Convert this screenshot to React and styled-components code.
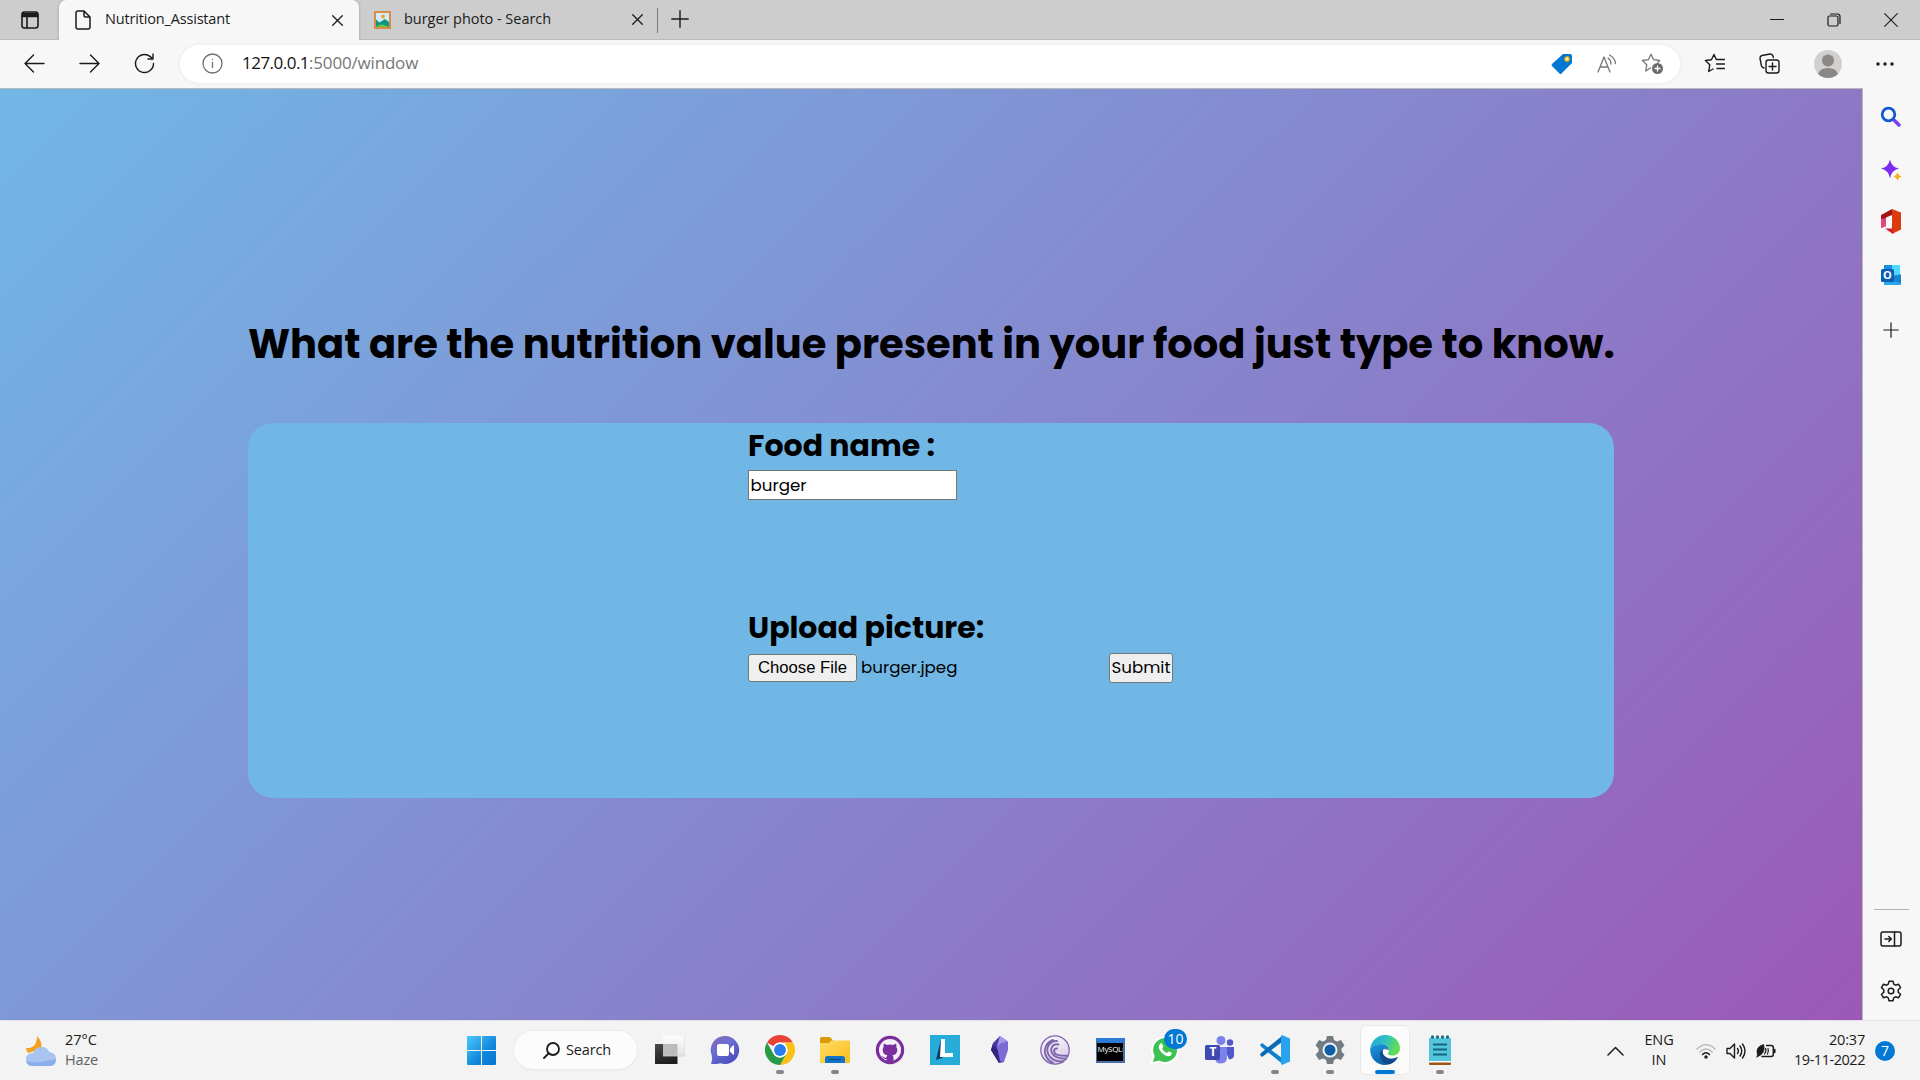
import React from "react";
import styled, { createGlobalStyle, css } from "styled-components";

const Global = createGlobalStyle`
  *, *::before, *::after { box-sizing: border-box; }
  html, body { margin: 0; padding: 0; overflow: hidden; }
  body { background: #f7f7f7; font-family: "Segoe UI", "Open Sans", sans-serif; }
  svg { display: block; flex: none; }
`;

const Desktop = styled.div`
  width: 1920px;
  height: 1080px;
  display: grid;
  grid-template-rows: 40px 48px 932px 60px;
  color: #1b1b1b;
`;

const Label = styled.span`
  display: block;
  white-space: pre;
  font-size: ${(p) => p.$size || 14.5}px;
  line-height: ${(p) => p.$line || 20}px;
  letter-spacing: ${(p) => p.$track || 0}px;
  color: ${(p) => p.$color || "#1b1b1b"};
`;

/* ---------- tab strip ---------- */
const TabStrip = styled.header`
  display: flex;
  align-items: stretch;
  background: #cdcdcd;
  border-bottom: 1px solid #bdbdbd;
`;
const TabActions = styled.button`
  width: 59px;
  border: 0;
  padding: 0 0 0 21px;
  background: transparent;
  display: flex;
  align-items: center;
`;
const Tab = styled.div`
  width: 299px;
  display: flex;
  align-items: center;
  padding: 0 15px;
  gap: 13px;
  ${(p) =>
    p.$active &&
    css`
      height: 40px;
      width: 300px;
      padding-right: 16px;
      background: #f7f7f7;
      border-radius: 7px 7px 0 0;
      box-shadow: 0 0 3px rgba(0, 0, 0, 0.25);
      clip-path: inset(0 -4px 0 -4px);
    `}
`;
const TabTitle = styled(Label)`
  flex: 1;
  padding-bottom: 2px;
`;
const Separator = styled.span`
  width: 1px;
  height: 25px;
  margin-top: 8px;
  margin-left: -1px;
  background: #7c7c7c;
`;
const NewTab = styled.span`
  display: flex;
  align-items: center;
  padding-left: 13px;
  padding-bottom: 1px;
`;
const WindowControls = styled.div`
  margin-left: auto;
  padding-right: 22px;
  display: flex;
  align-items: center;
  gap: 43px;
`;

/* ---------- toolbar ---------- */
const Toolbar = styled.nav`
  display: flex;
  align-items: center;
  background: #f7f7f7;
  padding: 0 25px 1px 24px;
`;
const NavButtons = styled.div`
  display: flex;
  align-items: center;
  gap: 34px;
  width: 156px;
`;
const AddressBar = styled.div`
  width: 1500px;
  height: 38px;
  border-radius: 19px;
  background: #fff;
  box-shadow: 0 0 4px rgba(0, 0, 0, 0.08);
  display: flex;
  align-items: center;
  padding: 0 17px 0 22px;
`;
const Url = styled.div`
  display: flex;
  padding-left: 19px;
  padding-bottom: 1px;
  flex: 1;
`;
const AddressActions = styled.div`
  display: flex;
  align-items: center;
  gap: 24px;
`;
const ToolbarActions = styled.div`
  display: flex;
  align-items: center;
  margin-left: auto;
  gap: 34px;

  > :last-child {
    margin-left: -1px;
  }
`;

/* ---------- page ---------- */
const Workspace = styled.div`
  display: grid;
  grid-template-columns: 1863px 57px;
`;
const Page = styled.main`
  border-top: 1px solid #b9b9b9;
  border-right: 1px solid #b9b9b9;
  background: linear-gradient(135deg, #71b7e6, #9b59b6);
  padding: 225px 248px 0;
  font-family: Poppins, Inter, sans-serif;
`;
const Title = styled.h1`
  margin: 0 0 49px;
  font-size: 40px;
  line-height: 60px;
  font-weight: 700;
  white-space: nowrap;
  color: #000;
`;
const Card = styled.section`
  width: 1366px;
  height: 375px;
  border-radius: 25px;
  background: #71b7e6;
  padding-left: 500px;
  display: flex;
  flex-direction: column;
  align-items: flex-start;
`;
const FieldTitle = styled.h2`
  margin: ${(p) => p.$top || 0}px 0 0;
  font-size: 30px;
  line-height: 46px;
  font-weight: 700;
  white-space: nowrap;
  color: #000;
`;
const TextField = styled.div`
  width: 209px;
  height: 30px;
  margin-top: 1px;
  padding: 0 1.5px;
  border: 1px solid #767676;
  background: #fff;
  display: flex;
  align-items: center;
`;
const UploadRow = styled.div`
  display: flex;
  align-items: center;
  height: 30px;
  margin-top: 2px;
`;
const Button = styled.button`
  width: ${(p) => p.$w}px;
  height: ${(p) => p.$h}px;
  padding: 0 0 ${(p) => (p.$native ? 0 : 2)}px;
  border: 1px solid #767676;
  border-radius: 3px;
  background: #efefef;
  display: flex;
  align-items: center;
  justify-content: center;
  font-family: ${(p) => (p.$native ? '"Liberation Sans", Arial, sans-serif' : "inherit")};
`;
const FileName = styled.div`
  width: 252px;
  padding: 0 0 2px 4px;
`;

/* ---------- sidebar ---------- */
const Sidebar = styled.aside`
  background: #f7f7f7;
  display: flex;
  flex-direction: column;
  align-items: center;
  padding-right: 1px;
`;
const SideSlot = styled.span`
  height: ${(p) => p.$h}px;
  display: flex;
  align-items: center;
`;
const SideRule = styled.span`
  margin-top: auto;
  width: 35px;
  height: 1px;
  background: #b4b4b4;
`;
const OutlookWrap = styled.span`
  position: relative;
  display: block;
`;
const OutlookO = styled.span`
  position: absolute;
  left: 1px;
  top: 4px;
  width: 13px;
  text-align: center;
  color: #fff;
  font: 700 11px/14px "Open Sans", sans-serif;
`;

/* ---------- taskbar ---------- */
const Taskbar = styled.footer`
  background: #f3f3f3;
  border-top: 1px solid #e4e2e6;
  display: flex;
  align-items: stretch;
`;
const Weather = styled.div`
  width: 457px;
  padding-left: 25px;
  display: flex;
  align-items: center;
  gap: 8px;
`;
const Stack = styled.div`
  display: flex;
  flex-direction: column;
  padding-bottom: 2px;
  align-items: ${(p) => p.$align || "flex-start"};
`;
const StartButton = styled.div`
  width: 57px;
  padding-left: 10px;
  display: flex;
  align-items: center;
`;
const SearchPill = styled.div`
  width: 123px;
  height: 38px;
  margin: 10px 8px 0 0;
  border-radius: 19px;
  background: #fcfcfc;
  box-shadow: 0 0 0 1px #ececec, 0 1px 1px #d8d8d8;
  padding-left: 29px;
  display: flex;
  align-items: center;
  gap: 6px;
`;
const Apps = styled.div`
  display: flex;
  gap: 7px;
  padding-top: 5px;
  margin-left: 1px;
`;
const AppTile = styled.div`
  position: relative;
  width: 48px;
  height: 48px;
  border-radius: 5px;
  display: flex;
  align-items: center;
  justify-content: center;
  background: ${(p) => (p.$active ? "#fbfbfb" : "transparent")};
  box-shadow: ${(p) => (p.$active ? "0 0 0 1px #e9e9e9" : "none")};
`;
const RunMark = styled.i`
  position: absolute;
  bottom: 0;
  left: 50%;
  transform: translateX(-50%);
  width: ${(p) => (p.$active ? 20 : 8)}px;
  height: 4px;
  border-radius: 2px;
  background: ${(p) => (p.$active ? "#0078d4" : "#868686")};
`;
const Count = styled.b`
  position: absolute;
  top: 3px;
  right: 2px;
  width: 23px;
  height: 20px;
  border-radius: 10px;
  background: #0078d4;
  color: #fff;
  font-weight: 400;
  font-size: 14px;
  line-height: 20px;
  text-align: center;
`;
const Tray = styled.div`
  margin-left: auto;
  padding-right: 25px;
  display: flex;
  align-items: center;
`;
const Language = styled(Stack)`
  width: 30px;
  margin: 0 22px 0 20px;
`;
const Status = styled.div`
  display: flex;
  gap: 10px;
  margin-right: 18px;
`;
const Clock = styled(Stack)`
  width: 71px;
`;
const Alerts = styled.b`
  width: 20px;
  height: 20px;
  margin-left: 10px;
  border-radius: 50%;
  background: #0078d4;
  color: #fff;
  font-weight: 400;
  font-size: 14px;
  line-height: 20px;
  text-align: center;
`;

/* ---------- icons ---------- */
const Line = ({ w = 20, h = w, box, sw = 1.4, color = "#1b1b1b", children }) => (
  <svg width={w} height={h} viewBox={box || `0 0 ${w} ${h}`} fill="none" stroke={color} strokeWidth={sw} strokeLinecap="round" strokeLinejoin="round">
    {children}
  </svg>
);
const Cross = ({ s = 11, sw = 1.3 }) => (
  <Line w={s} sw={sw}><path d={`M.7.7 ${s - 0.7} ${s - 0.7}M${s - 0.7}.7.7 ${s - 0.7}`} /></Line>
);

const OutlookIcon = () => (
  <OutlookWrap>
    <svg width="22" height="22" viewBox="0 0 22 22"><path fill="#1490df" d="M4 1h16v12H4z" /><path fill="#50d9ff" d="M12 1h8v10h-8z" /><path fill="#28a8ea" d="M4 11h17v10H4z" /><path fill="#0f6cbd" d="M4 15l17-5v9z" opacity=".6" /><rect x="1" y="5" width="13" height="13" rx="1.500" fill="#0a5fb4" /></svg>
    <OutlookO>O</OutlookO>
  </OutlookWrap>
);
const ChatIcon = () => (
  <svg width="30" height="30" viewBox="0 0 30 30">
    <defs><linearGradient id="chat" x1="0" y1="0" x2=".7" y2="1"><stop offset="0" stopColor="#8f64b4" /><stop offset=".45" stopColor="#6b6fd0" /><stop offset="1" stopColor="#4b4cc0" /></linearGradient></defs>
    <path fill="url(#chat)" d="M15 1a14 14 0 1 1-4.500 27.200c-3 .8-6.500 1-9.500.8 1-2.500 1.200-5 .8-8.500A14 14 0 0 1 15 1z" />
    <rect x="7" y="9" width="12" height="12" rx="2" fill="#fff" /><path d="M20 13.500l3-3q1-.8 1 .5v8q0 1.300-1 .5l-3-3z" fill="#fff" />
  </svg>
);
const ChromeIcon = () => (
  <svg width="30" height="30" viewBox="0 0 48 48">
    <path fill="#ea4335" d="M24 0a24 24 0 0 1 20.800 12H24a12 12 0 0 0-10.400 6L3.200 12A24 24 0 0 1 24 0z" />
    <path fill="#fbc116" d="M44.800 12A24 24 0 0 1 24 48l10.400-18A12 12 0 0 0 34 17.400L32 12z" />
    <path fill="#2a9a48" d="M3.200 12l10.400 18A12 12 0 0 0 27.500 35.400L34.400 30 24 48A24 24 0 0 1 3.200 12z" />
    <circle cx="24" cy="24" r="12" fill="#fff" /><circle cx="24" cy="24" r="9.500" fill="#2a7df0" />
  </svg>
);
const FolderIcon = () => (
  <svg width="30" height="30" viewBox="0 0 30 30">
    <defs><linearGradient id="fold" x1="0" y1="0" x2="1" y2="1"><stop offset="0" stopColor="#ffdc63" /><stop offset="1" stopColor="#fbbd1d" /></linearGradient></defs>
    <path fill="#d89a05" d="M0 3.500Q0 2 1.500 2H9q1.300 0 2 1l2 2.500V10H0z" /><path fill="url(#fold)" d="M0 8h8.500l3-2.500H29q1 0 1 1V27q0 1-1 1H1q-1 0-1-1z" />
    <path fill="#1174c4" d="M5 28v-4.500Q5 21 7.500 21h15q2.500 0 2.500 2.500V28z" /><path stroke="#0a4f8f" strokeWidth="1.200" d="M9 24.500h12" />
  </svg>
);
const GithubIcon = () => (
  <svg width="30" height="30" viewBox="0 0 30 30">
    <circle cx="15" cy="15" r="14.200" fill="#7a2e9e" /><circle cx="15" cy="15" r="11" fill="#f5f0f8" />
    <path fill="#7a2e9e" d="M9 8.500l3 1.500q3-.8 6 0l3-1.500q.8 2 .3 3.500 1.200 1.500 1 3.500-.3 4-4.800 4.800 1 1 1 2.700v3.300h-7V24c-3 .5-3.500-1.800-5-2.700 1.700-.3 2.400 1.400 3.500 1.500q1 0 1.500-.4.100-1.300.9-2.100Q8 19.500 7.700 15.500q-.2-2 1-3.500Q8.200 10.500 9 8.500z" />
  </svg>
);
const LIcon = () => (
  <svg width="30" height="30" viewBox="0 0 30 30"><path fill="#27acd9" d="M0 0h30v30H0z" /><path fill="#10396b" d="M11 4L6 25l6-2 2-3z" /><path fill="#fff" d="M11 4h4v14h8v4H10z" /></svg>
);
const ObsidianIcon = () => (
  <svg width="30" height="30" viewBox="0 0 30 30"><path fill="#4a3aa6" d="M15 1L8 8l-2 7 8 13 5-1z" /><path fill="#32257e" d="M8 9l-2 6 8 13 2-9z" /><path fill="#7c6bd6" d="M15 1l8 5.500V15l-4 12-4-1-3-14z" /><path fill="#a497ea" d="M15 1l8 5.500-7 1.500-4 4z" /></svg>
);
const TorrentIcon = () => (
  <svg width="30" height="30" viewBox="0 0 30 30" fill="none" stroke="#7f65ad" strokeLinecap="round">
    <defs><linearGradient id="bit" x1="0" y1="0" x2=".3" y2="1"><stop offset="0" stopColor="#fbf9fd" /><stop offset="1" stopColor="#d9cdea" /></linearGradient></defs>
    <circle cx="15" cy="15" r="14.200" fill="url(#bit)" strokeWidth="1.300" />
    <path strokeWidth="1.900" d="M17 13.500c-3.500-.5-4 4-.5 6 1.500 1 6 1.300 11 1.200M18.500 9.500c-6-1.500-9.500 5-5.500 10 2 2.700 6 4 13 4.200M17 6c-7-.5-12.500 7-8 14.500 2.500 4 7 6.200 14 6M13 5C5.500 7.500 3 15.500 6.500 22c1.500 2.700 4 5 6.500 6" />
  </svg>
);
const MysqlWindow = styled.div`
  width: 29px;
  height: 25px;
  background: #000;
  border: 1px solid #4a6ea5;
  border-right-width: 2px;
  border-bottom-width: 2px;
  border-top: 5px solid #2b7bd6;
  color: #fff;
  font: 400 8px/9px "Open Sans", sans-serif;
  letter-spacing: -0.3px;
  padding: 1px 0 0 1px;
  white-space: nowrap;
  overflow: hidden;
`;
const WhatsappIcon = () => (
  <svg width="30" height="30" viewBox="0 0 30 30"><path fill="#fff" d="M15 1a14 14 0 1 1-6 26.500L0 30l2.500-8.500A14 14 0 0 1 15 1z" /><path fill="#3cc34f" d="M15 3a12 12 0 1 1-5.800 22.500L3 27l1.700-6A12 12 0 0 1 15 3z" /><path fill="#fff" d="M10.500 8.500c1-.6 1.500 0 1.800.8l.9 2.200c.2.700-1.200 1.800-.8 2.400 1 1.800 2.400 3 4.200 3.800.8.300 1.400-1.400 2.200-1.300l2.500 1.200c.8.500.2 2.200-.6 2.900-1.200 1-3 .9-4.700.2-3.600-1.400-6-4.300-7-7.100-.5-1.900 0-4 1.500-5.100z" /></svg>
);
const TeamsBox = styled.span`
  position: relative;
  display: block;
`;
const TeamsT = styled.span`
  position: absolute;
  left: 0;
  top: 9px;
  width: 16px;
  text-align: center;
  color: #fff;
  font: 700 12px/16px "Open Sans", sans-serif;
`;
const TeamsIcon = () => (
  <TeamsBox>
    <svg width="30" height="30" viewBox="0 0 30 30"><circle cx="25" cy="7.500" r="3.200" fill="#5059c9" /><path fill="#5059c9" d="M19 12h10v8q0 4-5 4.500z" /><circle cx="16" cy="5.500" r="4.500" fill="#7b83eb" /><path fill="#7b83eb" d="M10 12h12v10q0 6.500-6 6.500T10 23z" /><rect x="0" y="10" width="15" height="15" rx="1.500" fill="#4049b0" /></svg>
    <TeamsT>T</TeamsT>
  </TeamsBox>
);
const VscodeIcon = () => (
  <svg width="30" height="30" viewBox="0 0 30 30"><path fill="#0f7fd0" d="M0 10l2-2 20 15v5.500L1.500 12z" /><path fill="#0a6bb8" d="M0 20l2 2L22 7V1L1 18z" /><path fill="#2aa3ee" d="M22 0l8 3.500v23L22 30l-1-1V1z" /></svg>
);
const GearFill = () => (
  <svg width="30" height="30" viewBox="0 0 30 30"><path fill="#737b82" d="M12 1h6l1 4 3 1.500L26 5l3.500 5.500-3 3v3l3 3L26 25l-4-1.500-3 1.500-1 4h-6l-1-4-3-1.500L4 25 .5 19.500l3-3v-3l-3-3L4 5l4 1.500L11 5z" /><circle cx="15" cy="15" r="7.500" fill="#eef2f5" /><circle cx="15" cy="15" r="5.500" fill="#0f5ea8" /></svg>
);
const EdgeIcon = () => (
  <svg width="30" height="30" viewBox="0 0 30 30">
    <defs><linearGradient id="edgeTop" x1="0" y1="0" x2="1" y2=".3"><stop offset="0" stopColor="#1da3e0" /><stop offset=".55" stopColor="#30c3c0" /><stop offset="1" stopColor="#64dd52" /></linearGradient><linearGradient id="edgeLow" x1="0" y1="0" x2=".6" y2="1"><stop offset="0" stopColor="#1c9be0" /><stop offset="1" stopColor="#0c59a4" /></linearGradient></defs>
    <path fill="url(#edgeTop)" d="M.3 13.500C1.500 5.500 7.500 0 15 0c9 0 15 6.500 15 13 0 5-3.500 7.500-7.500 7.500-3 0-5-1-4.700-2 .3-.8 1.200-1.500 1.200-3.500 0-3.200-3.500-6-8-6C6 9 2.500 10.500.3 13.500z" />
    <path fill="url(#edgeLow)" d="M.3 13.500C2.500 10.500 6 9 11 9c4.500 0 8 2.800 8 6-1.200-2.500-6-2.800-6.500 1-.4 4.500 4.500 8 9.500 7.800 2.500 0 4.500-1.300 5.800-1.800C25.500 27 20.500 30 15 30 6 30-.7 22 .3 13.500z" />
    <path fill="#114a8b" d="M19 15c-4-1.500-9-.5-9 4.500 0 5.500 4.500 10 10 9.500 3.500-1.300 6-3.500 7.800-7-1.300.5-3.300 1.800-5.800 1.800-5 .2-9.900-3.300-9.500-7.800.5-3.800 5.300-3.500 6.500-1z" />
  </svg>
);
const NotepadIcon = () => (
  <svg width="30" height="30" viewBox="0 0 30 30"><path fill="#55c5dc" d="M4 3h22v24H4z" /><path fill="#9c5718" d="M4 27h22v2q0 1-1 1H5q-1 0-1-1z" /><path fill="#fff" d="M4 26h22v1.500H4z" /><g fill="#176b86"><circle cx="7.500" cy="2" r="1.700" /><circle cx="12.500" cy="2" r="1.700" /><circle cx="17.500" cy="2" r="1.700" /><circle cx="22.500" cy="2" r="1.700" /></g><path stroke="#13677f" strokeWidth="1.800" d="M8 9.500h14M8 14.500h14M8 19.500h14" /></svg>
);
const TaskViewIcon = () => (
  <svg width="30" height="30" viewBox="0 0 30 30"><defs><linearGradient id="tvd" x1="0" y1="0" x2=".4" y2="1"><stop offset="0" stopColor="#4a4a48" /><stop offset="1" stopColor="#1e1e1e" /></linearGradient><linearGradient id="tvl" x1="0" y1="0" x2="0" y2="1"><stop offset="0" stopColor="#fdfdfd" /><stop offset="1" stopColor="#e3e3e3" /></linearGradient></defs><path fill="url(#tvd)" d="M0 9h22.500v20H0z" /><path fill="url(#tvl)" d="M8 1h22v20H8z" /><path fill="#bcbcbb" d="M8 9h14.500v12H8z" /><path d="M8 21h22V1" fill="none" stroke="#cfcfcf" strokeWidth=".8" /></svg>
);

const APPS = [
  { id: "tasks", icon: <TaskViewIcon /> },
  { id: "chat", icon: <ChatIcon /> },
  { id: "chrome", icon: <ChromeIcon />, run: true },
  { id: "files", icon: <FolderIcon />, run: true },
  { id: "github", icon: <GithubIcon /> },
  { id: "l", icon: <LIcon /> },
  { id: "obsidian", icon: <ObsidianIcon /> },
  { id: "torrent", icon: <TorrentIcon /> },
  { id: "mysql", icon: <MysqlWindow>MySQL›</MysqlWindow> },
  { id: "whatsapp", icon: <WhatsappIcon />, count: 10 },
  { id: "teams", icon: <TeamsIcon /> },
  { id: "code", icon: <VscodeIcon />, run: true },
  { id: "settings", icon: <GearFill />, run: true },
  { id: "edge", icon: <EdgeIcon />, run: true, active: true },
  { id: "notepad", icon: <NotepadIcon />, run: true },
];

export default function App() {
  return (
    <>
      <Global />
      <Desktop>
        <TabStrip>
          <TabActions>
            <Line w={18} sw={1.600}><rect x="1" y="1" width="16" height="16" rx="2.500" /><path d="M2 2.500h14M1.500 4h15M1 5.500h16M6 5.500V17" /></Line>
          </TabActions>
          <Tab $active>
            <Line w={18} h={20} sw={1.500}><path d="M4 1h6l6 6v10q0 2-2 2H4q-2 0-2-2V3q0-2 2-2zM10 1v4.500q0 1.500 1.500 1.500H16" /></Line>
            <TabTitle $track={-0.17}>Nutrition_Assistant</TabTitle>
            <Cross />
          </Tab>
          <Tab>
            <svg width="17" height="18" viewBox="0 0 17 18"><path fill="#d98b48" d="M0 0h17v18H0z" /><path fill="#cfeefa" d="M2 2h13v14H2z" /><circle cx="9" cy="5.500" r="2" fill="#f2a33a" /><path fill="#12977f" d="M2 8.500l3.500 3L11 8l4 3v5H2z" /><path fill="#6cc04a" d="M2 16q5-5 13 0z" /></svg>
            <TabTitle $track={-0.04}>burger photo - Search</TabTitle>
            <Cross />
          </Tab>
          <Separator />
          <NewTab><Line w={18}><path d="M9 .8v16.400M.8 9h16.400" /></Line></NewTab>
          <WindowControls>
            <Line w={14} sw={1.200}><path d="M.5 6.500h13" /></Line>
            <Line w={14} sw={1.200}><rect x="1" y="3" width="10" height="10" rx="1.500" /><path d="M3.500 1h7q2.500 0 2.500 2.500v7" /></Line>
            <Cross s={14} sw={1.100} />
          </WindowControls>
        </TabStrip>

        <Toolbar>
          <NavButtons>
            <Line w={21}><path d="M20 10.500H1M9.500 2L1 10.500 9.500 19" /></Line>
            <Line w={21}><path d="M1 10.500h19M11.500 2l8.500 8.500-8.500 8.500" /></Line>
            <Line w={21}><path d="M19.500 10.500a9 9 0 1 1-3.500-7.100L19 6M19 1v5h-5" /></Line>
          </NavButtons>
          <AddressBar>
            <Line w={21} sw={1.300} color="#707070"><circle cx="10.500" cy="10.500" r="9.500" /><path d="M10.500 9.500v5M10.500 6.400v.2" /></Line>
            <Url><Label $size={17} $line={24} $color="#111" $track={-0.52}>127.0.0.1</Label><Label $size={17} $line={24} $color="#767676" $track={-0.18}>:5000/window</Label></Url>
            <AddressActions>
              <svg width="22" height="22" viewBox="0 0 22 22"><path fill="#0078d4" d="M12 1h7q2 0 2 2v7L10.500 20.500q-1 1-2 0L1 13q-1-1 0-2z" /><circle cx="16" cy="6" r="2.300" fill="#fff3b0" stroke="#d9a400" strokeWidth="1.200" /></svg>
              <Line w={20} sw={1.300} color="#767676"><path d="M1 18L7 3l6 15M3 13h8M11 4q3 2 3 6M12.500 1q5.500 3 6 8.500" /></Line>
              <Line w={22} sw={1.300} color="#767676"><path d="M9.500 15l-4.800 3 1.100-6.300L1.400 7.500l6-.8L10 1.200l2.600 5.500 6 .8-1.800 2" /><circle cx="16.500" cy="15.500" r="5.500" fill="#6b6b6b" stroke="none" /><path stroke="#fff" d="M16.500 13v5M14 15.500h5" /></Line>
            </AddressActions>
          </AddressBar>
          <ToolbarActions>
            <Line w={21}><path d="M12.300 6.500L10 1.500 7.400 6.700l-6 .8 4.400 4.200-1.100 6.800L9 16M13 6.500h7.500M12.500 11h8M13 15.500h7.500" /></Line>
            <Line w={21}><rect x="7" y="7" width="13" height="13" rx="2.500" /><path d="M13.500 10v7M10 13.500h7M5 15q-2-.5-2.500-2L1 5.500Q.8 3 3 2.500l8-1.500q2.200-.3 3 2l.3 1.500" /></Line>
            <svg width="28" height="28" viewBox="0 0 28 28"><circle cx="14" cy="14" r="14" fill="#d2d0ce" /><circle cx="14" cy="10.500" r="6" fill="#8a8886" /><path fill="#8a8886" d="M4 24q2-6 10-6t10 6q-4 4-10 4T4 24z" /></svg>
            <svg width="20" height="6" viewBox="0 0 20 6"><g fill="#1b1b1b"><circle cx="3" cy="3" r="1.700" /><circle cx="10" cy="3" r="1.700" /><circle cx="17" cy="3" r="1.700" /></g></svg>
          </ToolbarActions>
        </Toolbar>

        <Workspace>
          <Page>
            <Title>What are the nutrition value present in your food just type to know.</Title>
            <Card>
              <FieldTitle>Food name :</FieldTitle>
              <TextField><Label $size={16.670} $line={25} $color="#000">burger</Label></TextField>
              <FieldTitle $top={105}>Upload picture:</FieldTitle>
              <UploadRow>
                <Button $w={109} $h={28} $native><Label $size={16.670} $color="#000">Choose File</Label></Button>
                <FileName><Label $size={16.670} $line={25} $color="#000">burger.jpeg</Label></FileName>
                <Button $w={64} $h={30}><Label $size={16.670} $color="#000">Submit</Label></Button>
              </UploadRow>
            </Card>
          </Page>
          <Sidebar>
            <SideSlot $h={57}><svg width="22" height="22" viewBox="0 0 22 22"><path stroke="#7a3df0" strokeWidth="3.500" strokeLinecap="round" d="M14.500 14.500l4.500 4.500" /><circle cx="8.500" cy="8.500" r="6.300" fill="#f7f7f7" stroke="#1257cf" strokeWidth="2.800" /></svg></SideSlot>
            <SideSlot $h={50}><svg width="22" height="22" viewBox="0 0 22 22"><path fill="#7a2cf0" d="M10 .5q1.500 7.500 9 9-7.500 1.500-9 10-1.500-8.500-9-10 7.500-1.500 9-9z" /><path fill="#f0b020" d="M17.500 13q.8 3.700 4.500 4.500-3.700.8-4.500 4.500-.8-3.700-4.500-4.500 3.700-.8 4.500-4.500z" /></svg></SideSlot>
            <SideSlot $h={52}><svg width="22" height="25" viewBox="0 0 22 25"><path fill="#dc3c0c" d="M12 0l9 3.500v17L12 25z" /><path fill="#a51414" d="M12 0v6l-6 2.500V17l-5 2V6z" /><path fill="#e0487c" d="M1 10l5-1v8l-5 2z" /><path fill="#d81e2c" d="M5 19.500h8V25z" /></svg></SideSlot>
            <SideSlot $h={55}><OutlookIcon /></SideSlot>
            <SideSlot $h={56}><Line w={16} sw={1.200}><path d="M8 .8v14.400M.8 8h14.400" /></Line></SideSlot>
            <SideRule />
            <SideSlot $h={57}><Line w={22} h={16} sw={1.500}><rect x="1" y="1" width="20" height="14" rx="2" /><path d="M14.500 1v14M5 8h6M8.800 5.500L11.300 8l-2.500 2.500" /></Line></SideSlot>
            <SideSlot $h={48}><Line w={22} box="0 0 22 22" sw={1.500}><path d="M9 1.200h4l.7 3 1.800 1 3-1 2 3.500-2.300 2.100v2.400l2.300 2.100-2 3.500-3-1-1.800 1-.7 3H9l-.7-3-1.800-1-3 1-2-3.500 2.300-2.100V9.800L1.500 7.700l2-3.500 3 1 1.800-1z" /><circle cx="11" cy="11" r="2.800" /></Line></SideSlot>
            <SideSlot $h={5} />
          </Sidebar>
        </Workspace>

        <Taskbar>
          <Weather>
            <svg width="32" height="32" viewBox="0 0 32 32"><path fill="#f3a21f" d="M12 1q6 6 4 13L3 18q-2-3-2-5 11 1 11-12z" /><path fill="#a9c4f0" d="M8 31q-7 0-7-6.500T8 18q2-6 8-6 6.500 0 8 5 7 .5 7 7t-6 7z" /><path fill="#7ea5e6" d="M8 31q-6 0-7-5 10 3 30-2 0 7-6 7z" opacity=".7" /></svg>
            <Stack><Label>27°C</Label><Label $color="#606060" $track={-0.18}>Haze</Label></Stack>
          </Weather>
          <StartButton>
            <svg width="29" height="29" viewBox="0 0 29 29"><defs><linearGradient id="win" x1="0" y1="0" x2="1" y2="1"><stop offset="0" stopColor="#4cc9f8" /><stop offset=".6" stopColor="#1187dc" /><stop offset="1" stopColor="#0574d0" /></linearGradient></defs><path fill="url(#win)" d="M0 1q0-1 1-1h13v14H0zM15 0h13q1 0 1 1v13H15zM0 15h14v14H1q-1 0-1-1zM15 15h14v13q0 1-1 1H15z" /></svg>
          </StartButton>
          <SearchPill>
            <Line w={17} sw={1.800}><circle cx="10" cy="7" r="6" /><path d="M5.500 11.500L1 16" /></Line>
            <Label $track={-0.15}>Search</Label>
          </SearchPill>
          <Apps>
            {APPS.map((a) => (
              <AppTile key={a.id} $active={a.active}>
                {a.icon}
                {a.count && <Count>{a.count}</Count>}
                {a.run && <RunMark $active={a.active} />}
              </AppTile>
            ))}
          </Apps>
          <Tray>
            <Line w={17} h={10} sw={1.500}><path d="M1 9l7.500-7.500L16 9" /></Line>
            <Language $align="center"><Label $track={-0.15}>ENG</Label><Label>IN</Label></Language>
            <Status>
              <Line w={20} sw={1.500}><g stroke="#bcbcbc"><path d="M1 8q9-8.500 18 0" /><path d="M3.800 11q6.200-6 12.400 0" /></g><path d="M6.500 13.500q3.500-3.500 7 0" /><circle cx="10" cy="16" r="1" fill="#1b1b1b" /></Line>
              <Line w={20} sw={1.400}><path d="M1 7.500h3L8.500 3v14L4 12.500H1zM11.500 7.500q1.800 2.500 0 5M14 5q3.500 5 0 10M16.500 3q5 7 0 14" /></Line>
              <Line w={20} sw={1.400}><path d="M10.500 4.500h4.800q2 0 2 2v7q0 2-2 2H6M18.800 8.500v3" strokeWidth="1.500" /><path fill="#1b1b1b" strokeWidth=".8" d="M1.500 13.500Q-1 6 7.500 3.500q2 7-3 10.500l-3.500 2z" /><path d="M9.500 7.500q1.300 2.500-1 5.500M12 7.500q1 3-.5 5.500" strokeWidth="1.200" /></Line>
            </Status>
            <Clock $align="flex-end"><Label $track={-0.2}>20:37</Label><Label $track={-0.47}>19-11-2022</Label></Clock>
            <Alerts>7</Alerts>
          </Tray>
        </Taskbar>
      </Desktop>
    </>
  );
}
